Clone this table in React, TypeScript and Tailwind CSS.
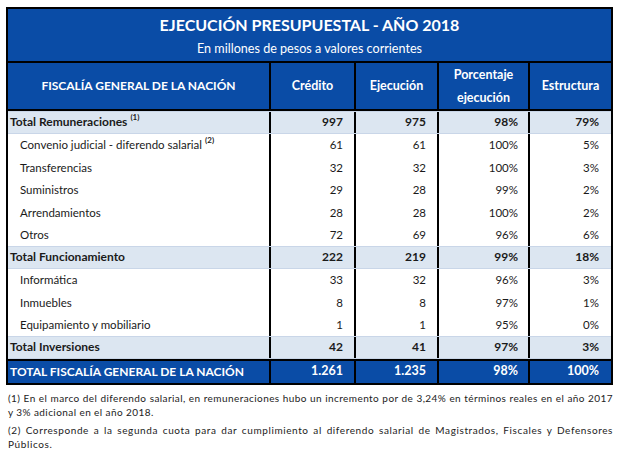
const rows = [
  { label: 'Total Remuneraciones', sup: '(1)', c: '997', e: '975', p: '98%', s: '79%', total: true },
  { label: 'Convenio judicial - diferendo salarial', sup: '(2)', c: '61', e: '61', p: '100%', s: '5%' },
  { label: 'Transferencias', c: '32', e: '32', p: '100%', s: '3%' },
  { label: 'Suministros', c: '29', e: '28', p: '99%', s: '2%' },
  { label: 'Arrendamientos', c: '28', e: '28', p: '100%', s: '2%' },
  { label: 'Otros', c: '72', e: '69', p: '96%', s: '6%' },
  { label: 'Total Funcionamiento', c: '222', e: '219', p: '99%', s: '18%', total: true },
  { label: 'Informática', c: '33', e: '32', p: '96%', s: '3%' },
  { label: 'Inmuebles', c: '8', e: '8', p: '97%', s: '1%' },
  { label: 'Equipamiento y mobiliario', c: '1', e: '1', p: '95%', s: '0%' },
  { label: 'Total Inversiones', c: '42', e: '41', p: '97%', s: '3%', total: true },
];

const cols = 'grid grid-cols-[261px_85px_83px_91px_83px]';

export default function App() {
  return (
    <div className="w-[619px] h-[451px] bg-white pt-[7px] pl-[6px] font-['Lato','Liberation_Sans',sans-serif] text-[#1a1a1a]">
      <div className="w-[607px] border-2 border-black">
        {/* Title */}
        <div className="h-[52px] bg-[#0a4ca6] text-white flex flex-col items-center">
          <div className="text-[16px] font-bold leading-none mt-[8px]">EJECUCIÓN PRESUPUESTAL - AÑO 2018</div>
          <div className="text-[12.6px] leading-none mt-[10px]">En millones de pesos a valores corrientes</div>
        </div>

        {/* Header */}
        <div className={`${cols} h-[50px] border-y-2 border-black bg-[#0a4ca6] text-white font-bold text-[12.5px]`}>
          <div className="flex items-center justify-center text-[12px]">FISCALÍA GENERAL DE LA NACIÓN</div>
          <div className="flex items-center justify-center border-l-2 border-black">Crédito</div>
          <div className="flex items-center justify-center border-l-2 border-black">Ejecución</div>
          <div className="flex flex-col items-center justify-center border-l-2 border-black leading-[23px]">
            <span>Porcentaje</span>
            <span>ejecución</span>
          </div>
          <div className="flex items-center justify-center border-l-2 border-black">Estructura</div>
        </div>

        {/* Body */}
        {rows.map((r) => (
          <div
            key={r.label}
            className={`${cols} h-[22.5px] text-[11.5px] ${
              r.total ? 'bg-[#dce6f1] font-bold text-[12px] border-y border-y-[#c9d6e8]' : 'bg-white'
            }`}
          >
            <div className={`flex items-center ${r.total ? 'pl-[2px]' : 'pl-[12px]'}`}>
              {r.label}
              {r.sup && <sup className="text-[8px] font-bold ml-[3px] -top-[5px]">{r.sup}</sup>}
            </div>
            <div className="flex items-center justify-end pr-[11px] border-l-2 border-black">{r.c}</div>
            <div className="flex items-center justify-end pr-[11px] border-l-2 border-black">{r.e}</div>
            <div className="flex items-center justify-end pr-[10px] border-l-2 border-black">{r.p}</div>
            <div className="flex items-center justify-end pr-[12px] border-l-2 border-black">{r.s}</div>
          </div>
        ))}

        {/* Grand total */}
        <div className={`${cols} h-[24px] border-t-2 border-black bg-[#0a4ca6] text-white font-bold text-[12.5px]`}>
          <div className="flex items-center pl-[2px] text-[12px]">TOTAL FISCALÍA GENERAL DE LA NACIÓN</div>
          <div className="flex items-center justify-end pr-[11px] border-l-2 border-black">1.261</div>
          <div className="flex items-center justify-end pr-[11px] border-l-2 border-black">1.235</div>
          <div className="flex items-center justify-end pr-[10px] border-l-2 border-black">98%</div>
          <div className="flex items-center justify-end pr-[12px] border-l-2 border-black">100%</div>
        </div>
      </div>

      {/* Footnotes */}
      <div className="w-[605px] ml-[2px] mt-[6px] text-[10px] leading-[14px] text-[#222] text-justify">
        <p className="tracking-[0.42px]">
          (1) En el marco del diferendo salarial, en remuneraciones hubo un incremento por de 3,24% en términos reales en el año 2017 y 3% adicional en el año 2018.
        </p>
        <p className="mt-[4px] tracking-[0.6px]">
          (2) Corresponde a la segunda cuota para dar cumplimiento al diferendo salarial de Magistrados, Fiscales y Defensores Públicos.
        </p>
      </div>
    </div>
  );
}
